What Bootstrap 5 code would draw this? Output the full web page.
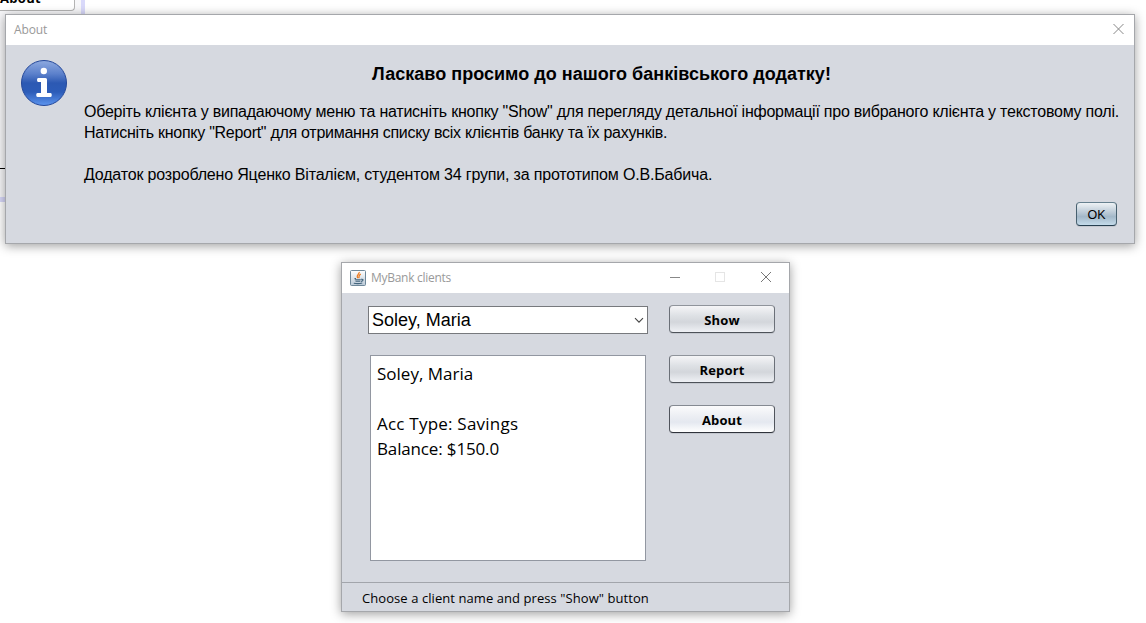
<!DOCTYPE html>
<html lang="uk">
<head>
<meta charset="utf-8">
<title>MyBank clients</title>
<link href="https://cdn.jsdelivr.net/npm/bootstrap@5.3.0/dist/css/bootstrap.min.css" rel="stylesheet">
<style>
body{width:1146px;height:623px;background:#fff;color:#000;font-family:"Open Sans","Noto Sans",sans-serif}
.win{position:absolute;border:1px solid #a5a7ab;background:#d6d9e0;box-shadow:0 2px 10px rgba(0,0,0,.38)}
.titlebar{height:30px;background:#fff;color:#999;font-size:12px;line-height:30px}
.dialog-win{left:5px;top:14px;width:1130px;height:230px}
.bank-win{left:341px;top:262px;width:449px;height:350px}
.info-icon{margin:14px 0 0 14px}
.message{min-width:0;padding:0 15px 0 16px;font:16px/21px "Liberation Sans",Arial,sans-serif;white-space:nowrap}
.message h1{font:bold 18px/22px "Liberation Sans",Arial,sans-serif;margin:18px 0 16px;letter-spacing:.03px}
.message p{margin:0}
.swing-btn{height:28px;padding:0;border:1px solid #6b7078;border-top-color:#8f949b;border-bottom-color:#4d5259;border-radius:4px;background:linear-gradient(#f5f5f7 0%,#dfe2e6 35%,#d3d6db 62%,#eff1f5 100%);font-size:13px;line-height:28px;font-weight:700;letter-spacing:.15px;box-shadow:0 1px 0 #c3c7ce;color:#000}
.swing-btn.hot{background:linear-gradient(#fbfbfc 0%,#eceef3 40%,#e4e8f0 62%,#fff 100%);border-color:#50545c;border-top-color:#858a92;border-bottom-color:#2f333b}
.swing-btn.ok{width:41px;height:24px;padding-top:1px;border-color:#47606f;border-top-color:#66808f;border-bottom-color:#263f50;background:linear-gradient(#eef2f5 0%,#b9c8d5 45%,#a3b8c9 62%,#c4dbea 100%);font:12.5px/22px "Liberation Sans",Arial,sans-serif;letter-spacing:0}
.combo{width:280px;height:28px;border:1px solid #77797d;background:#fff;font:18px/26px "Liberation Sans",Arial,sans-serif;padding:0 3px}
.details{width:276px;height:206px;margin:21px 0 0 2px;border:1px solid #9297a1;background:#fff;padding:5px 6px;font-size:17px;line-height:25px}
.details div{height:25px;white-space:nowrap}
.status{height:29px;border-top:1px solid #a2a5ab;font-size:13px;line-height:30px;padding-left:20px;white-space:nowrap}
.buttons{width:106px;gap:22px;margin-top:-1px}
.client-area{padding:13px 14px 0 26px}
.behind{position:absolute;left:0;top:0;width:85px;height:202px;border-right:4px solid #d9d9fa;border-bottom:5px solid #d9d9fa;background:#f7f7f9;overflow:hidden}
.behind-btn{width:75px;height:11px;border:1px solid #b4b4b4;border-width:0 1px 1px 0;border-radius:0 0 4px 0;background:#fff;font-size:13px;font-weight:700;line-height:18px;overflow:hidden;letter-spacing:.3px}
.behind-btn span{display:block;margin-top:-11px}
.behind-rule{margin-top:157px;height:1px;background:#000}
.t1{letter-spacing:-.235px}.t2{letter-spacing:-.28px}.t3{letter-spacing:-.175px}
.tt1{letter-spacing:-.15px}.tt2{letter-spacing:-.28px}
.td2{letter-spacing:.22px}.td3{letter-spacing:-.15px}.ts{letter-spacing:.07px}
</style>
</head>
<body class="position-relative overflow-hidden">
<div class="behind"><div class="behind-btn"><span>About</span></div><div class="behind-rule"></div></div>

<section class="win dialog-win d-flex flex-column">
  <header class="titlebar d-flex justify-content-between align-items-center ps-2">
    <span class="tt1">About</span>
    <svg class="me-2" width="14" height="12" viewBox="0 0 14 12"><path d="M1.5 0l10 10M11.5 0l-10 10" stroke="#888" fill="none"/></svg>
  </header>
  <div class="d-flex flex-grow-1">
    <svg class="info-icon flex-shrink-0" width="48" height="48" viewBox="0 0 48 48">
      <defs><linearGradient id="ig" x1="0" y1="0" x2="0" y2="1"><stop offset="0" stop-color="#8eaae0"/><stop offset=".3" stop-color="#5b80cb"/><stop offset=".5" stop-color="#2c59b3"/><stop offset=".7" stop-color="#2c5cb8"/><stop offset="1" stop-color="#5d95ef"/></linearGradient></defs>
      <circle cx="24" cy="24" r="22.5" fill="url(#ig)" stroke="#24489a"/>
      <circle cx="23.8" cy="12" r="3.2" fill="#fff"/>
      <path d="M18.2 19H25.5Q27 19 27 20.5V34H30.5Q31.8 34 31.8 36T30.5 38H17.5Q16.2 38 16.2 36T17.5 34H21V23H18.2Q17 23 17 21T18.2 19Z" fill="#fff"/>
    </svg>
    <div class="message flex-grow-1">
      <h1 class="text-center">Ласкаво просимо до нашого банківського додатку!</h1>
      <p><span class="t1">Оберіть клієнта у випадаючому меню та натисніть кнопку "Show" для перегляду детальної інформації про вибраного клієнта у текстовому полі.</span></p>
      <p><span class="t2">Натисніть кнопку "Report" для отримання списку всіх клієнтів банку та їх рахунків.</span></p>
      <p>&nbsp;</p>
      <p><span class="t3">Додаток розроблено Яценко Віталієм, студентом 34 групи, за прототипом О.В.Бабича.</span></p>
    </div>
  </div>
  <footer class="d-flex justify-content-end" style="padding:0 17px 17px 0"><button class="swing-btn ok">OK</button></footer>
</section>

<section class="win bank-win d-flex flex-column">
  <header class="titlebar d-flex align-items-center ps-2">
    <svg width="16" height="16" viewBox="0 0 16 16"><defs><linearGradient id="jg" x1="0" y1="0" x2="0" y2="1"><stop offset="0" stop-color="#fff"/><stop offset="1" stop-color="#b9c8d6"/></linearGradient></defs><rect x=".5" y=".5" width="15" height="15" rx="1" fill="url(#jg)" stroke="#6d8799"/><path d="M9.2 2C9.8 4 5.6 5 7.6 8.2M10.8 4.2C7.6 5.5 10 6.3 8.6 8.2" fill="none" stroke="#ed7b20" stroke-width="1.3"/><path d="M4.5 8.5h1.5M4.8 9.7h6M5.5 11.3h4.8M3.8 13.2q4.5 .9 8.4-.2M11 9.2q3-.2 1.6 1.6l-1.6.7" fill="none" stroke="#42647c" stroke-width="1.1"/></svg>
    <span class="tt2 ms-1" style="padding-left:1px">MyBank clients</span>
    <svg class="ms-auto" style="margin-right:16px" width="103" height="12" viewBox="0 0 103 12"><path d="M0 5.5h10" stroke="#888"/><rect x="45.5" y=".5" width="9" height="9" fill="none" stroke="#e5e5e5"/><path d="M91 0l10 10M101 0l-10 10" stroke="#777"/></svg>
  </header>
  <main class="client-area d-flex flex-grow-1">
    <div>
      <div class="combo d-flex align-items-center justify-content-between"><span>Soley, Maria</span><svg width="10" height="6" viewBox="0 0 10 6"><path d="M1 1.2l4 4 4-4" fill="none" stroke="#444" stroke-width="1.1"/></svg></div>
      <div class="details"><div>Soley, Maria</div><div></div><div><span class="td2">Acc Type: Savings</span></div><div><span class="td3">Balance: $150.0</span></div></div>
    </div>
    <div class="buttons ms-auto d-flex flex-column">
      <button class="swing-btn">Show</button><button class="swing-btn">Report</button><button class="swing-btn hot">About</button>
    </div>
  </main>
  <footer class="status"><span class="ts">Choose a client name and press "Show" button</span></footer>
</section>
<script src="https://cdn.jsdelivr.net/npm/bootstrap@5.3.0/dist/js/bootstrap.bundle.min.js"></script>
</body>
</html>
